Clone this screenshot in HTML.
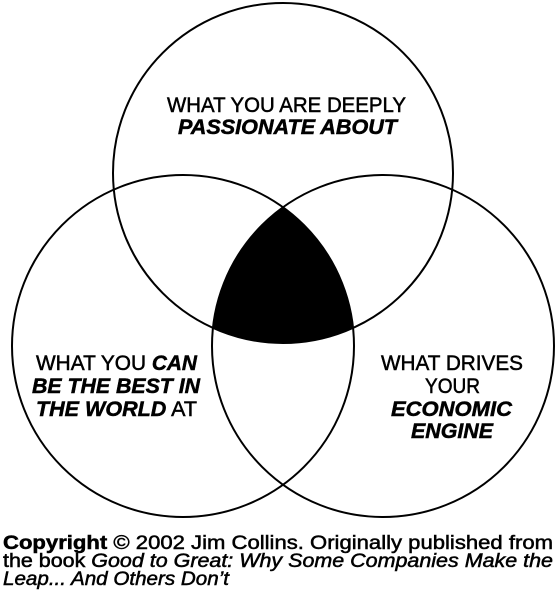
<!DOCTYPE html>
<html><head><meta charset="utf-8"><style>
html,body{margin:0;padding:0;background:#fff;width:555px;height:600px;overflow:hidden}
svg{display:block}
text{font-family:"Liberation Sans",Arial,sans-serif;fill:#000;stroke:#000;stroke-width:0.5}
</style></head><body>
<svg width="555" height="600" viewBox="0 0 555 600" xmlns="http://www.w3.org/2000/svg">
<defs>
<clipPath id="cL"><circle cx="183" cy="346" r="171"/></clipPath>
<clipPath id="cR"><circle cx="383" cy="346" r="171"/></clipPath>
</defs>
<g clip-path="url(#cL)"><g clip-path="url(#cR)"><circle cx="283" cy="173" r="170" fill="#000"/></g></g>
<g fill="none" stroke="#000" stroke-width="2">
<circle cx="283" cy="173" r="170"/>
<circle cx="183" cy="346" r="171"/>
<circle cx="383" cy="346" r="171"/>
</g>
<g font-size="21">
<text x="167" y="112" textLength="239" lengthAdjust="spacingAndGlyphs">WHAT YOU ARE DEEPLY</text>
<text x="178" y="134" textLength="219" lengthAdjust="spacingAndGlyphs" font-weight="bold" font-style="italic">PASSIONATE ABOUT</text>
<text x="36" y="370" textLength="161" lengthAdjust="spacingAndGlyphs">WHAT YOU <tspan font-weight="bold" font-style="italic">CAN</tspan></text>
<text x="32" y="393" textLength="168" lengthAdjust="spacingAndGlyphs" font-weight="bold" font-style="italic">BE THE BEST IN</text>
<text x="36" y="416" textLength="161" lengthAdjust="spacingAndGlyphs"><tspan font-weight="bold" font-style="italic">THE WORLD</tspan> AT</text>
<text x="381" y="370" textLength="142" lengthAdjust="spacingAndGlyphs">WHAT DRIVES</text>
<text x="425" y="393" textLength="55" lengthAdjust="spacingAndGlyphs">YOUR</text>
<text x="391" y="416" textLength="121" lengthAdjust="spacingAndGlyphs" font-weight="bold" font-style="italic">ECONOMIC</text>
<text x="411" y="438" textLength="82" lengthAdjust="spacingAndGlyphs" font-weight="bold" font-style="italic">ENGINE</text>
</g>
<g font-size="19">
<text x="3" y="549" textLength="550" lengthAdjust="spacingAndGlyphs"><tspan font-weight="bold">Copyright</tspan> © 2002 Jim Collins. Originally published from</text>
<text x="3" y="567" textLength="550" lengthAdjust="spacingAndGlyphs">the book <tspan font-style="italic">Good to Great: Why Some Companies Make the</tspan></text>
<text x="3" y="585" textLength="226" lengthAdjust="spacingAndGlyphs" font-style="italic">Leap... And Others Don’t</text>
</g>
</svg>
</body></html>
